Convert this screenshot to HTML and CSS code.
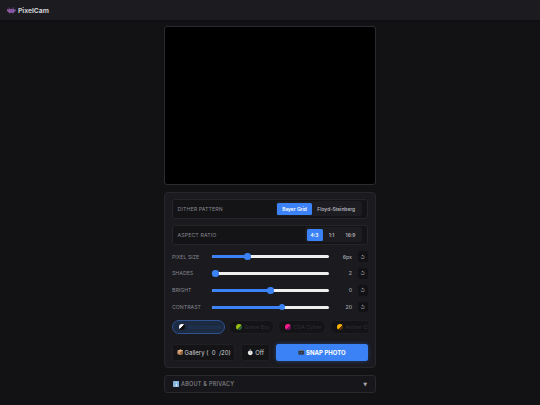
FILE: index.html
```html
<!DOCTYPE html>
<html lang="en">
<head>
<meta charset="utf-8">
<title>PixelCam</title>
<link rel="stylesheet" href="styles.css">
</head>
<body>
<header class="topbar">
  <svg class="ico-logo" viewBox="0 0 11 8"><path fill="#8e5aa8" d="M2 0h1v1h1v1h3V1h1V0h1v1H8v1h1v1h1V2h1v3h-1v1H9v1H8v1H7V7H4v1H3V7H2V6H1V5H0V2h1v1h1V2h1V1H2z"/><path fill="#3a2547" d="M3.500 3h1v1h-1zM6.500 3h1v1h-1z"/></svg>
  <span class="brand">PixelCam</span>
</header>
<main class="page">
  <div class="viewport"></div>
  <section class="panel">
    <div class="optrow">
      <span class="optlabel">DITHER PATTERN</span>
      <div class="seg">
        <span class="segbtn active wide">Bayer Grid</span>
        <span class="segbtn wide2">Floyd-Steinberg</span>
      </div>
    </div>
    <div class="optrow">
      <span class="optlabel">ASPECT RATIO</span>
      <div class="seg">
        <span class="segbtn active r43">4:3</span>
        <span class="segbtn r11">1:1</span>
        <span class="segbtn r169">16:9</span>
      </div>
    </div>
    <div class="sliders">
      <div class="slider"><span class="slabel">PIXEL SIZE</span><div class="track"><div class="fill" style="width:30%"></div><div class="knob" style="left:30%"></div></div><span class="sval">6px</span><span class="reset">↺</span></div>
      <div class="slider"><span class="slabel">SHADES</span><div class="track"><div class="fill" style="width:2.500%"></div><div class="knob" style="left:2.500%"></div></div><span class="sval">2</span><span class="reset">↺</span></div>
      <div class="slider"><span class="slabel">BRIGHT</span><div class="track"><div class="fill" style="width:50%"></div><div class="knob" style="left:50%"></div></div><span class="sval">0</span><span class="reset">↺</span></div>
      <div class="slider"><span class="slabel">CONTRAST</span><div class="track"><div class="fill" style="width:59.500%"></div><div class="knob" style="left:59.500%"></div></div><span class="sval">20</span><span class="reset">↺</span></div>
    </div>
    <div class="chips">
      <div class="chip selected"><span class="swatch" style="--a:#ffffff;--b:#111111"></span><span class="chiptext sel">Monochrome</span></div>
      <div class="chip gb"><span class="swatch" style="--a:#9bbc0f;--b:#306230"></span><span class="chiptext">Game Boy</span></div>
      <div class="chip cga"><span class="swatch" style="--a:#ff1a8c;--b:#7a1060"></span><span class="chiptext">CGA Cyber</span></div>
      <div class="chip last"><span class="swatch" style="--a:#ffb000;--b:#553300"></span><span class="chiptext">Amber CRT</span></div>
    </div>
    <div class="actions">
      <div class="btn gallery">
        <svg class="ico" viewBox="0 0 8 8"><path fill="#c89468" d="M4 .5 7.500 2v4L4 7.500.500 6V2z"/><path fill="#8f6036" d="M4 3.500 7.500 2v4L4 7.500z"/><path fill="#e0b48c" d="M4 .5 7.500 2 4 3.500.500 2z"/></svg>
        <span>Gallery ( &nbsp;0&nbsp; /20)</span>
      </div>
      <div class="btn timer">
        <svg class="ico" viewBox="0 0 8 8"><circle cx="4" cy="4.700" r="3" fill="#eeeeee"/><path fill="#eeeeee" d="M3.300.5h1.400v1H3.300z"/><path stroke="#555" stroke-width=".6" d="M4 4.700V3"/></svg>
        <span>Off</span>
      </div>
      <div class="btn snap">
        <svg class="ico" viewBox="0 0 8 7"><path fill="#3a3f4a" d="M.5 1.500h7v5h-7z"/><path fill="#a9834f" d="M2.500.5h3v1h-3z"/><circle cx="4" cy="4" r="1.600" fill="#16263c"/><circle cx="4" cy="4" r=".8" fill="#6b8db5"/></svg>
        <span>SNAP PHOTO</span>
      </div>
    </div>
  </section>
  <section class="about">
    <span class="abouttitle">
      <svg class="ico" viewBox="0 0 7 7"><rect width="7" height="7" fill="#7fb2dc" rx=".6"/><path fill="#fff" d="M3 1h1v1H3zM3 3h1v3H3z"/></svg>
      ABOUT &amp; PRIVACY
    </span>
    <span class="caret">▼</span>
  </section>
</main>
</body>
</html>
```
FILE: styles.css
```css
* { box-sizing: border-box; }
html, body { margin: 0; padding: 0; }
body {
  width: 540px;
  height: 405px;
  overflow: hidden;
  background: #121214;
  color: #d0d0d6;
  font-family: Inter, "Liberation Sans", sans-serif;
  font-size: 5.250px;
}
.topbar {
  height: 20px;
  background: #1b1b20;
  display: flex;
  align-items: center;
  gap: 2.500px;
  padding-left: 7px;
  box-shadow: 0 1px 2px rgba(0,0,0,.3);
}
.ico-logo { width: 8.500px; height: 7px; }
.brand { font-weight: 700; font-size: 6.750px; color: #d0d0d6; }
.page {
  width: 212px;
  margin: 6px auto 0 164px;
  display: flex;
  flex-direction: column;
}
.viewport {
  width: 212px;
  height: 159px;
  background: #000;
  border: 0.500px solid #2b2b31;
  border-radius: 3px;
}
.panel {
  margin-top: 6.500px;
  height: 176.500px;
  background: #1a1a1f;
  border: 0.500px solid #26262c;
  border-radius: 4px;
  padding: 6px 7px 0;
  display: flex;
  flex-direction: column;
}
.optrow {
  height: 20.500px;
  margin-bottom: 5.500px;
  background: #141417;
  border: 0.500px solid #25252a;
  border-radius: 3px;
  display: flex;
  align-items: center;
  justify-content: space-between;
  padding: 0 5px 0 4.500px;
}
.optlabel { color: #85858d; font-size: 5.250px; letter-spacing: .1px; }
.seg {
  display: flex;
  align-items: center;
  height: 15px;
  padding: 1.500px;
  background: #1c1c21;
  border-radius: 2.500px;
}
.segbtn {
  height: 11.500px;
  display: flex;
  align-items: center;
  justify-content: center;
  font-size: 4.875px;
  font-weight: 600;
  color: #b5b5bb;
  border-radius: 1.500px;
}
.segbtn.wide { width: 35px; }
.segbtn.wide2 { width: 48.500px; }
.segbtn.r43 { width: 16px; }
.segbtn.r11 { width: 18px; }
.segbtn.r169 { width: 20px; }
.segbtn.active { background: #3b82f6; color: #fff; }
.sliders {
  margin-top: .750px;
  display: flex;
  flex-direction: column;
  gap: 6.400px;
}
.slider {
  height: 10.500px;
  display: flex;
  align-items: center;
}
.slabel { width: 40.500px; color: #85858d; font-size: 5.250px; }
.track {
  position: relative;
  width: 117px;
  height: 3px;
  background: #efefef;
  border-radius: 2px;
}
.fill { height: 100%; background: #3b82f6; border-radius: 2px; }
.knob {
  position: absolute;
  top: 50%;
  width: 6.500px;
  height: 6.500px;
  margin: -3.250px 0 0 -3.250px;
  background: #3b82f6;
  border-radius: 50%;
}
.sval {
  width: 23px;
  text-align: right;
  color: #a8a8ae;
  font-size: 5.250px;
  font-weight: 500;
}
.reset {
  width: 10.500px;
  height: 10.500px;
  margin-left: 5.500px;
  background: #121215;
  border-radius: 2px;
  display: flex;
  align-items: center;
  justify-content: center;
  font-size: 5px;
  color: #aaaab0;
}
.chips {
  margin-top: 7.500px;
  height: 14.500px;
  display: flex;
  gap: 4px;
  overflow: hidden;
}
.chip {
  flex: none;
  height: 14.500px;
  background: #141417;
  border: 0.500px solid #1e1e23;
  border-radius: 7.250px;
  display: flex;
  align-items: center;
  gap: 3px;
  padding-left: 6px;
  white-space: nowrap;
}
.chip.selected {
  width: 52.500px;
  background: #1c2a42;
  border: 0.500px solid #2e5290;
}
.chip.gb { width: 45px; }
.chip.cga { width: 48px; }
.chip.last { width: 46px; }
.swatch {
  flex: none;
  width: 6px;
  height: 6px;
  border-radius: 50%;
  background: linear-gradient(135deg, var(--a) 50%, var(--b) 50%);
}
.chiptext { font-size: 5.250px; color: #2e2e33; }
.chiptext.sel { color: #273b60; }
.actions {
  margin-top: 9.500px;
  display: flex;
  gap: 5.500px;
  height: 17.500px;
}
.btn {
  height: 100%;
  border-radius: 2.500px;
  display: flex;
  align-items: center;
  justify-content: center;
  gap: 1.500px;
  white-space: nowrap;
}
.btn.gallery, .btn.timer {
  background: #141417;
  border: 0.500px solid #1f1f24;
  color: #cfcfd4;
  font-size: 6px;
  font-weight: 400;
}
.gallery { width: 63.500px; }
.timer { width: 29.500px; }
.snap {
  width: 92.500px;
  background: #3b82f6;
  color: #fff;
  font-weight: 700;
  font-size: 6px;
  box-shadow: 0 0 4px rgba(59,130,246,.4);
}
.ico { width: 6.500px; height: 6.500px; flex: none; }
.about {
  margin-top: 7px;
  height: 18px;
  background: #17171b;
  border: 0.500px solid #28282e;
  border-radius: 3px;
  display: flex;
  align-items: center;
  justify-content: space-between;
  padding: 0 8px 0 7.500px;
}
.abouttitle {
  display: flex;
  align-items: center;
  gap: 2px;
  color: #85858d;
  font-size: 5.500px;
  font-weight: 500;
  letter-spacing: .25px;
}
.caret { color: #aaaab0; font-size: 5px; font-family: "DejaVu Sans", sans-serif; }
```
